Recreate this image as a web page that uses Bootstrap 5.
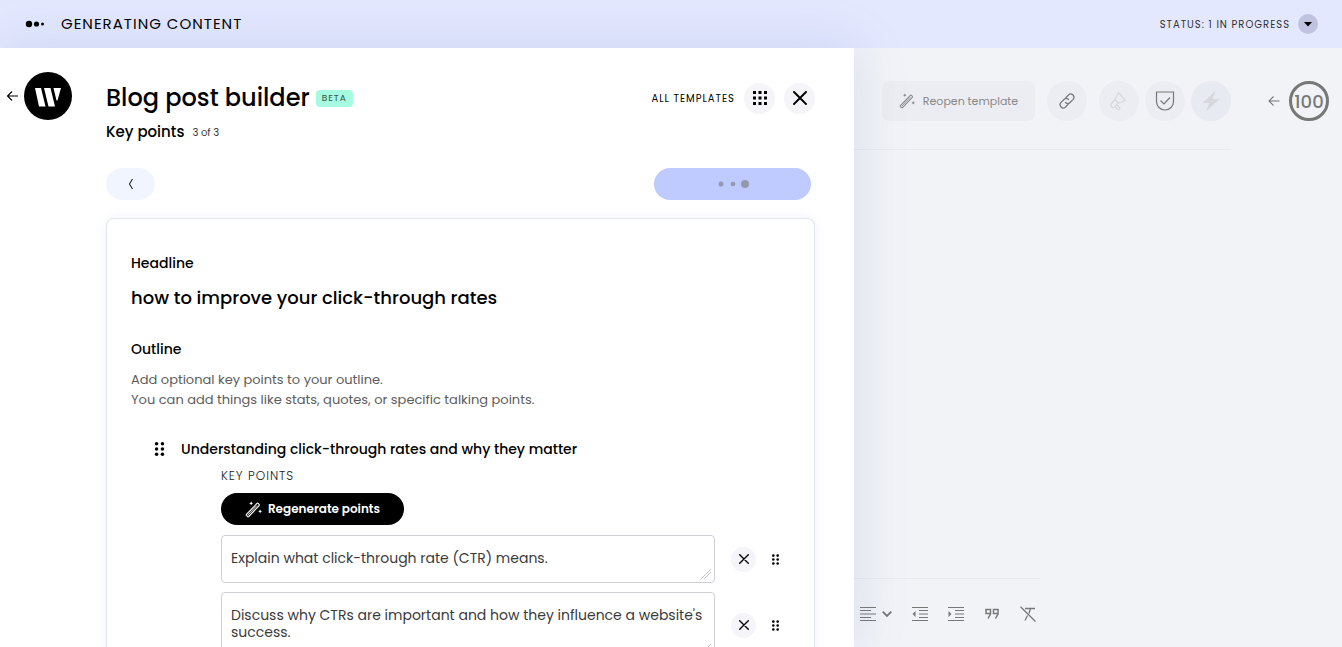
<!DOCTYPE html>
<html lang="en">
<head>
<meta charset="utf-8">
<meta name="viewport" content="width=device-width, initial-scale=1">
<title>Blog post builder</title>
<link href="https://cdn.jsdelivr.net/npm/bootstrap@5.3.0/dist/css/bootstrap.min.css" rel="stylesheet">
<style>
  body { font-family: Poppins, Inter, "Open Sans", sans-serif; color: #000; background: #f1f3f7; font-size: 14px; }
  button, textarea { font-family: inherit; }
  svg { display: block; flex: none; }
  a { color: inherit; text-decoration: none; }
  .status-bar { height: 48px; padding: 0 24px; background: #e3e8fe; flex: none; }
  .status-title { font-size: 15px; letter-spacing: 1px; margin-left: 17px; }
  .status-note { font-size: 10px; letter-spacing: 1px; color: #333; }
  .workspace { display: grid; grid-template-columns: 7fr 4fr; min-height: 0; }
  .builder { background: #fff; padding: 24px 39px 0 0; box-shadow: 0 0 50px rgba(110, 130, 190, .2); z-index: 1; min-width: 0; min-height: 0; overflow: hidden; }
  .rail { width: 106px; height: 48px; padding-left: 6px; gap: 5px; flex: none; }
  .round { border: 0; border-radius: 50%; padding: 0; display: flex; align-items: center; justify-content: center; flex: none; color: inherit; background: #f4f4f9; }
  .round-20 { width: 20px; height: 20px; background: #bfc3df; }
  .round-25 { width: 25px; height: 25px; }
  .round-31 { width: 31px; height: 31px; }
  .round-40 { width: 40px; height: 40px; background: #ecedf2; }
  .round-faint { color: #d6d8dd; }
  .round-tinted { background: #e7eaf0; }
  .builder-head { margin-top: 10px; }
  .title-group { gap: 6px; }
  .head-actions { gap: 9px; }
  .page-title { font-size: 24px; line-height: 32px; font-weight: 500; }
  .beta { font-size: 9px; line-height: 17px; letter-spacing: 1px; padding: 0 6px; border-radius: 4px; background: #a6fae0; color: #35564c; }
  .caps-link { font-size: 10px; letter-spacing: 1px; }
  .step { font-size: 15px; line-height: 20px; font-weight: 500; }
  .step-count { font-size: 10px; color: #333; }
  .step-nav { margin-top: 26px; }
  .back-btn { width: 49px; height: 32px; border: 0; border-radius: 16px; background: #f1f5ff; }
  .next-btn { width: 157px; height: 32px; border: 0; border-radius: 16px; background: #bfcaff; margin-right: 4px; }
  .sheet { border: 1px solid #e2e6f0; border-bottom: 0; border-radius: 8px 8px 0 0; box-shadow: 0 0 12px rgba(120, 140, 240, .1); padding: 34px 24px 0; margin-top: 18px; }
  .label-title { font-size: 14px; line-height: 20px; font-weight: 500; }
  .headline { font-size: 18px; line-height: 26px; font-weight: 500; margin: 12px 0 28px; }
  .hint { font-size: 13px; line-height: 20px; color: #5c5c5c; margin: 11px 0 29px; }
  .outline-item { padding-left: 23px; }
  .points { padding: 7px 0 0 67px; }
  .caps-label { font-size: 12px; line-height: 20px; letter-spacing: 1px; color: #222; font-weight: 300; }
  .regen { width: 183px; height: 32px; border: 0; border-radius: 16px; background: #000; color: #fff; font-size: 12px; font-weight: 600; margin: 7px 0 10px; gap: 6px; }
  .point-row { margin-bottom: 9px; }
  .point-text { width: 494px; min-width: 0; border: 1px solid #d0d1d8; border-radius: 4px; padding: 14px 9px; font-size: 14px; line-height: 17px; color: #3a3a3a; overflow: hidden; display: block; }
  .point-text::-webkit-resizer { background: linear-gradient(135deg, transparent 46%, #c4c5cd 46%, #c4c5cd 52%, transparent 52%, transparent 64%, #c4c5cd 64%, #c4c5cd 70%, transparent 70%) 2px 2px / 10px 10px no-repeat; }
  .one-line { height: 48px; }
  .two-line { height: 66px; }
  .editor { min-width: 0; color: #777; }
  .editor-top { height: 101px; padding: 5px 13px 0 28px; }
  .reopen { height: 40px; width: 153px; border: 0; border-radius: 8px; background: #ecedf2; color: #888; font-size: 11px; margin-right: 12px; }
  .doc-tools { gap: 6px; margin-left: 12px; }
  .rule-top { border-top: 1px solid #e8eaef; margin-right: 111px; }
  .rule-bottom { border-top: 1px solid #e8eaef; margin-right: 302px; }
  .tool { border: 0; background: none; padding: 0; color: #777; display: flex; align-items: center; gap: 6px; }
  .format-bar { height: 68px; padding: 2px 0 0 6px; gap: 20px; }
  .score { width: 40px; height: 40px; border: 3px solid #777; border-radius: 50%; font-size: 18px; font-weight: 500; margin-left: 9px; }
</style>
</head>
<body class="vh-100 d-flex flex-column overflow-hidden">
<svg class="d-none">
  <symbol id="wand" viewBox="0 0 18 18"><g fill="none" stroke="currentColor" stroke-linejoin="round" stroke-linecap="round"><path d="M1.500 14.200 12.700 2.600q.6-.6 1.200 0l1 1q.6.6 0 1.200L4 16.400q-.6.5-1.200 0l-1.300-1.200q-.4-.5 0-1z" stroke-width="1.200"/><path d="M3.500 14.400l8.800-9.300"/></g><path d="M6.500.5l.7 1.300 1.300.7-1.300.7-.7 1.300-.7-1.300-1.300-.7 1.300-.7zM16 9l.7 1.300 1.300.7-1.300.7-.7 1.300-.7-1.300-1.300-.7 1.300-.7z" fill="currentColor"/></symbol>
  <symbol id="cross" viewBox="0 0 14 14"><path d="M1 1l12 12M13 1L1 13" stroke="currentColor" stroke-width="1.900" fill="none" stroke-linecap="round"/></symbol>
  <symbol id="grip" viewBox="0 0 8 12"><g fill="currentColor"><circle cx="1.500" cy="1.500" r="1.500"/><circle cx="6.500" cy="1.500" r="1.500"/><circle cx="1.500" cy="6" r="1.500"/><circle cx="6.500" cy="6" r="1.500"/><circle cx="1.500" cy="10.500" r="1.500"/><circle cx="6.500" cy="10.500" r="1.500"/></g></symbol>
  <symbol id="arrow" viewBox="0 0 12 12"><path d="M11.500 6H1M5.500 1.500 1 6l4.500 4.500" stroke="currentColor" stroke-width="1.100" fill="none"/></symbol>
</svg>
<header class="status-bar d-flex align-items-center justify-content-between">
  <div class="d-flex align-items-center">
    <svg width="20" height="8" viewBox="0 0 20 8"><circle cx="5" cy="4" r="3.200"/><circle cx="12.500" cy="4" r="2.600"/><circle cx="18.500" cy="4" r="1.500"/></svg>
    <span class="status-title">GENERATING CONTENT</span>
  </div>
  <div class="d-flex align-items-center gap-2">
    <span class="status-note">STATUS: 1 IN PROGRESS</span>
    <button class="round round-20" aria-label="Show status"><svg width="8" height="5"><path d="M0 0h8L4 4.500z"/></svg></button>
  </div>
</header>
<main class="workspace flex-grow-1">
  <section class="builder d-flex">
    <nav class="rail d-flex align-items-center">
      <a href="#" aria-label="Back"><svg width="13" height="12"><use href="#arrow"/></svg></a>
      <a href="#" aria-label="Home"><svg width="48" height="48" viewBox="0 0 48 48"><circle cx="24" cy="24" r="24"/><path fill="#fff" d="M11 16h6l4.500 18.500h-6.500zM20 16h6.500L31 34.500h-6.500zM29.500 16H37l-3.500 12.500h-1z"/></svg></a>
    </nav>
    <div class="flex-grow-1">
      <div class="builder-head d-flex justify-content-between align-items-center">
        <div class="title-group d-flex align-items-center"><h1 class="page-title m-0">Blog post builder</h1><span class="beta">BETA</span></div>
        <div class="head-actions d-flex align-items-center">
          <a href="#" class="caps-link">ALL TEMPLATES</a>
          <button class="round round-31" aria-label="Templates grid"><svg width="14" height="14"><path d="M0 0h3v3H0zM5.500 0h3v3h-3zM11 0h3v3h-3zM0 5.500h3v3H0zM5.500 5.500h3v3h-3zM11 5.500h3v3h-3zM0 11h3v3H0zM5.500 11h3v3h-3zM11 11h3v3h-3z"/></svg></button>
          <button class="round round-31" aria-label="Close"><svg width="14" height="14"><use href="#cross"/></svg></button>
        </div>
      </div>
      <div class="d-flex align-items-center gap-2 mt-2"><h2 class="step m-0">Key points</h2><span class="step-count">3 of 3</span></div>
      <div class="step-nav d-flex justify-content-between">
        <button class="back-btn d-flex align-items-center justify-content-center" aria-label="Previous step"><svg width="6" height="12"><path d="M4.500 1 1.500 6l3 5" fill="none" stroke="#333" stroke-width="1.200"/></svg></button>
        <button class="next-btn d-flex align-items-center justify-content-center" aria-label="Loading"><svg width="32" height="8" fill="#939aae"><circle cx="4" cy="4" r="2.500"/><circle cx="16" cy="4" r="2.300"/><circle cx="28" cy="4" r="4"/></svg></button>
      </div>
      <div class="sheet">
        <h3 class="label-title m-0">Headline</h3>
        <p class="headline">how to improve your click-through rates</p>
        <h3 class="label-title m-0">Outline</h3>
        <p class="hint">Add optional key points to your outline.<br>You can add things like stats, quotes, or specific talking points.</p>
        <div class="outline-item">
          <div class="d-flex align-items-center gap-3"><svg width="11" height="14"><use href="#grip"/></svg><h4 class="label-title m-0">Understanding click-through rates and why they matter</h4></div>
          <div class="points">
            <div class="caps-label">KEY POINTS</div>
            <button class="regen d-flex align-items-center justify-content-center"><svg width="17" height="17"><use href="#wand"/></svg>Regenerate points</button>
            <div class="point-row d-flex align-items-center gap-3">
              <textarea class="point-text one-line" aria-label="Key point 1" spellcheck="false">Explain what click-through rate (CTR) means.</textarea>
              <button class="round round-25" aria-label="Remove point 1"><svg width="10" height="10"><use href="#cross"/></svg></button>
              <svg width="7" height="11"><use href="#grip"/></svg>
            </div>
            <div class="point-row d-flex align-items-center gap-3">
              <textarea class="point-text two-line" aria-label="Key point 2" spellcheck="false">Discuss why CTRs are important and how they influence a website's success.</textarea>
              <button class="round round-25" aria-label="Remove point 2"><svg width="10" height="10"><use href="#cross"/></svg></button>
              <svg width="7" height="11"><use href="#grip"/></svg>
            </div>
          </div>
        </div>
      </div>
    </div>
  </section>
  <section class="editor d-flex flex-column">
    <div class="editor-top d-flex align-items-center">
      <button class="reopen d-flex align-items-center justify-content-center gap-2"><svg width="16" height="16"><use href="#wand"/></svg>Reopen template</button>
      <button class="round round-40" aria-label="Copy link"><svg width="18" height="18" viewBox="0 0 18 18" fill="none" stroke="currentColor" stroke-width="1.200" stroke-linecap="round"><path d="M8 5.500l2.700-2.700a3.200 3.200 0 0 1 4.500 4.500l-3.200 3.200a3.200 3.200 0 0 1-4.500 0"/><path d="M10 12.500l-2.700 2.700a3.200 3.200 0 0 1-4.500-4.500L6 7.500a3.200 3.200 0 0 1 4.500 0"/></svg></button>
      <div class="doc-tools d-flex">
        <button class="round round-40 round-faint" aria-label="Promote"><svg width="18" height="20" viewBox="0 0 18 20" fill="none" stroke="currentColor" stroke-width="1.200" stroke-linejoin="round"><path d="M8.500 1.500l7 8-7 2.500-3.500-3.500zM5 8.500l-3.500 4a2.300 2.300 0 0 0 3.300 3.300l3.700-3.800M5 15.500l2.500 2.800q1 .8 1.800 0t.2-1.800l-2.500-2.800"/></svg></button>
        <button class="round round-40" aria-label="Check content"><svg width="20" height="20" viewBox="0 0 20 20" fill="none" stroke="currentColor" stroke-width="1.200"><path d="M1.500 1h17v9.500a8.500 8.500 0 0 1-17 0z"/><path d="M5.500 9.500l3.500 3.500 6-6.500"/></svg></button>
        <button class="round round-40 round-tinted round-faint" aria-label="Quick actions"><svg width="18" height="20" viewBox="0 0 18 20" fill="currentColor"><path d="M13.500 0 .5 12h7L4 20.500 17.500 8h-7z"/></svg></button>
      </div>
      <a href="#" class="ms-auto" aria-label="Expand score"><svg width="12" height="12"><use href="#arrow"/></svg></a>
      <div class="score d-flex align-items-center justify-content-center">100</div>
    </div>
    <div class="rule-top"></div>
    <div class="rule-bottom mt-auto"></div>
    <div class="format-bar d-flex align-items-center">
      <button class="tool" aria-label="Align"><svg width="16" height="16" stroke="currentColor"><path d="M0 1.500h16M0 4.500h11M0 8h16M0 11.500h11M0 14.500h16"/></svg><svg width="10" height="6" fill="none" stroke="currentColor" stroke-width="1.800"><path d="M.7.700 5 5l4.300-4.300"/></svg></button>
      <button class="tool" aria-label="Outdent"><svg width="16" height="16" stroke="currentColor"><path d="M0 1.500h16M7 4.500h9M7 8h9M7 11.500h9M0 14.500h16"/><path d="M3.500 5v6L.5 8z" fill="currentColor" stroke="none"/></svg></button>
      <button class="tool" aria-label="Indent"><svg width="16" height="16" stroke="currentColor"><path d="M0 1.500h16M7 4.500h9M7 8h9M7 11.500h9M0 14.500h16"/><path d="M.5 5v6l3-3z" fill="currentColor" stroke="none"/></svg></button>
      <button class="tool" aria-label="Quote"><svg width="16" height="12" fill="none" stroke="currentColor" stroke-width="1.500"><path d="M6.500 5.500H2v-4h4.500v4.500L4 10.500M14 5.500H9.500v-4H14v4.500l-2.500 4.500"/></svg></button>
      <button class="tool" aria-label="Clear formatting"><svg width="16" height="16" fill="none" stroke="currentColor" stroke-width="1.300"><path d="M.5.700l15 14.800M5 2.500h10M10.500 2.500 9 7.500M7.500 9.500l-2.500 5"/></svg></button>
    </div>
  </section>
</main>
<script src="https://cdn.jsdelivr.net/npm/bootstrap@5.3.0/dist/js/bootstrap.bundle.min.js"></script>
</body>
</html>
